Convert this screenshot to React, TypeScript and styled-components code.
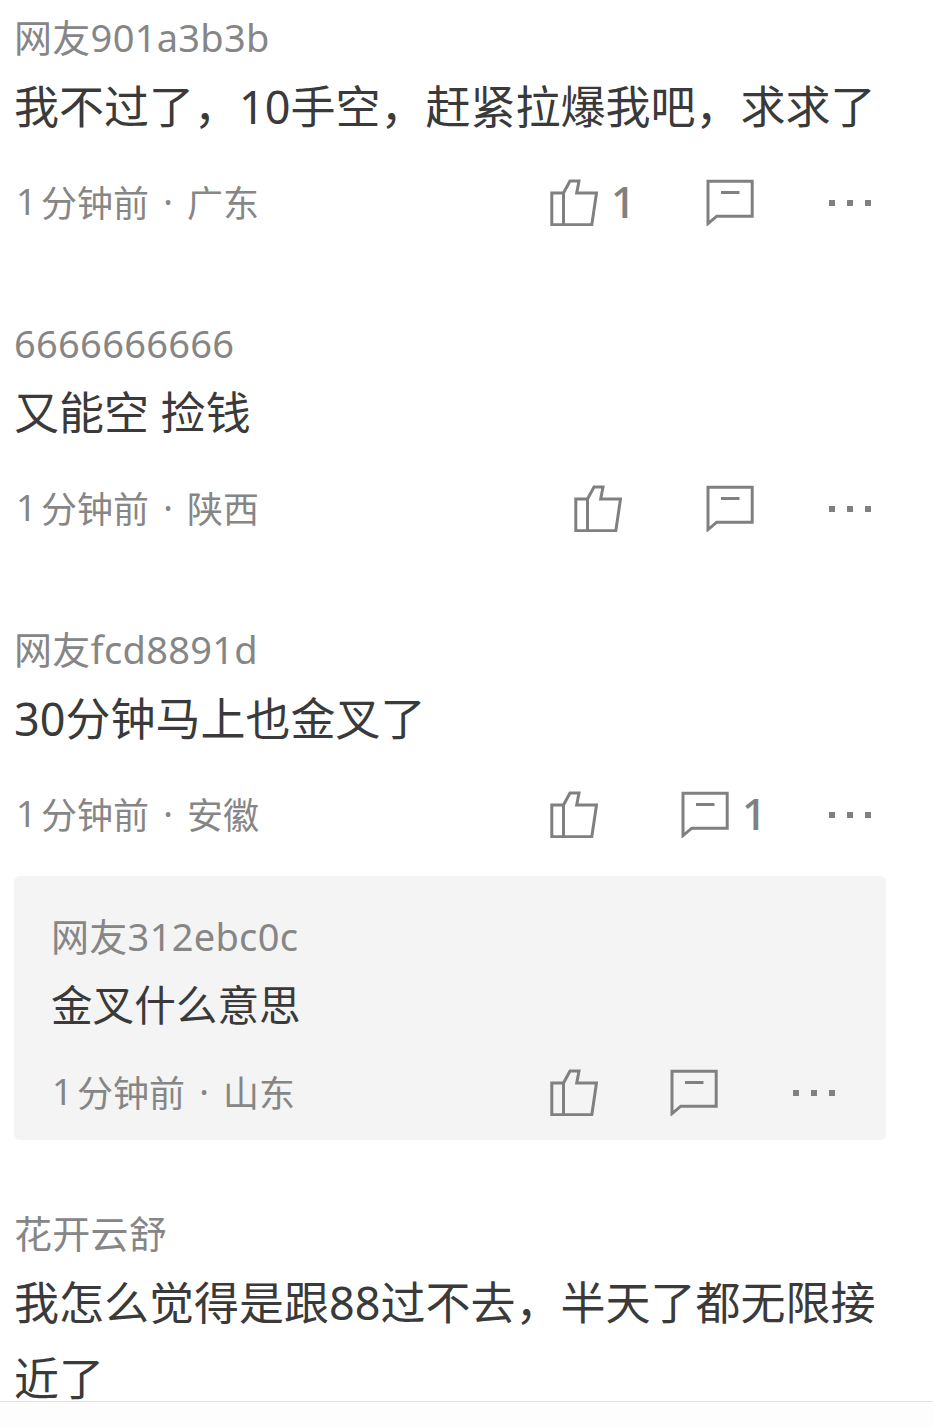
import React from "react";
import styled, { createGlobalStyle } from "styled-components";

const Global = createGlobalStyle`
  html, body { margin: 0; padding: 0; background: #fff; }
`;

const FONT = `"Noto Sans", "Noto Sans CJK SC", sans-serif`;

const Page = styled.main`
  position: relative;
  width: 933px;
  height: 1427px;
  overflow: hidden;
  background: #fff;
  padding: 12px 0 0 14px;
  box-sizing: border-box;
  font-family: ${FONT};
`;
const CommentBlock = styled.article<{ $after: number }>`
  width: 872px;
  margin-bottom: ${(p) => p.$after}px;
`;
const Name = styled.div`
  height: 50px;
  line-height: 50px;
  font-size: 38px;
  font-weight: 400;
  letter-spacing: 0.3px;
  color: #868686;
  white-space: nowrap;
`;
const Body = styled.div`
  margin-top: 7px;
  font-size: 45px;
  font-weight: 400;
  line-height: 76px;
  color: #3a3a3a;
`;
const MetaRow = styled.div<{ $right: number }>`
  display: flex;
  align-items: center;
  height: 48px;
  margin-top: 33px;
  padding: 0 ${(p) => p.$right}px 0 2px;
`;
const MetaText = styled.div`
  flex: 1;
  display: flex;
  align-items: center;
  font-size: 36px;
  font-weight: 400;
  color: #868686;
  white-space: pre;
  margin-top: -2px;
`;
const Digit = styled.span`
  width: 25px;
`;
const Sep = styled.span`
  width: 38px;
  text-align: center;
`;
const Action = styled.div<{ $after: number }>`
  display: flex;
  align-items: center;
  height: 48px;
  margin-right: ${(p) => p.$after}px;
  color: #808080;
`;
const Count = styled.span`
  margin-left: 13px;
  margin-top: -2px;
  font-size: 44px;
  font-weight: 500;
  line-height: 48px;
  color: #808080;
`;
const Dots = styled.div`
  display: flex;
  gap: 12px;
  margin-top: 2px;
`;
const Dot = styled.i`
  display: block;
  width: 6px;
  height: 6px;
  background: #808080;
`;
const Reply = styled.section`
  margin-top: 38px;
  width: 872px;
  box-sizing: border-box;
  padding: 35px 0 24px 37px;
  background: #f4f4f4;
  border-radius: 6px;
`;
const ReplyBody = styled.div`
  margin-top: 14px;
  font-size: 41.6px;
  font-weight: 400;
  line-height: 60px;
  color: #3a3a3a;
`;
const ReplyMeta = styled.div`
  margin-left: -1px;
`;
const Footer = styled.div`
  position: absolute;
  left: 0;
  right: 0;
  bottom: 0;
  height: 26px;
  box-sizing: border-box;
  border-top: 1px solid #e2e2e2;
  background: #fdfdfd;
`;

const ThumbIcon = () => (
  <svg width="48" height="48" viewBox="0 0 48 48" fill="none" stroke="currentColor" strokeWidth="3">
    <path d="M1.8 15H13.5V46.8H1.8Z" />
    <path d="M13.5 15L20 3H29L26.7 15H46.5L41.8 46.8H13.5" />
  </svg>
);
const BubbleIcon = () => (
  <svg width="48" height="48" viewBox="0 0 48 48" fill="none" stroke="currentColor" strokeWidth="3">
    <path d="M2 3.2H46.2V38.2H10.8L2 45.6Z" />
    <path d="M15 14.5H33.5" />
  </svg>
);

type MetaProps = {
  place: string;
  right?: number;
  likes?: number;
  replies?: number;
  likeAfter: number;
  replyAfter: number;
};

const Meta = ({ place, right = 15, likes, replies, likeAfter, replyAfter }: MetaProps) => (
  <MetaRow $right={right}>
    <MetaText>
      <Digit>1</Digit>
      <span>分钟前</span>
      <Sep>·</Sep>
      <span>{place}</span>
    </MetaText>
    <Action $after={likeAfter}>
      <ThumbIcon />
      {likes ? <Count>{likes}</Count> : null}
    </Action>
    <Action $after={replyAfter}>
      <BubbleIcon />
      {replies ? <Count>{replies}</Count> : null}
    </Action>
    <Dots>
      <Dot />
      <Dot />
      <Dot />
    </Dots>
  </MetaRow>
);

export default function App() {
  return (
    <Page>
      <Global />
      <CommentBlock $after={92}>
        <Name>网友901a3b3b</Name>
        <Body>我不过了，10手空，赶紧拉爆我吧，求求了</Body>
        <Meta place="广东" likes={1} likeAfter={70} replyAfter={75} />
      </CommentBlock>
      <CommentBlock $after={92}>
        <Name>6666666666</Name>
        <Body>又能空 捡钱</Body>
        <Meta place="陕西" likeAfter={84} replyAfter={75} />
      </CommentBlock>
      <CommentBlock $after={68}>
        <Name>网友fcd8891d</Name>
        <Body>30分钟马上也金叉了</Body>
        <Meta place="安徽" replies={1} likeAfter={83} replyAfter={62} />
        <Reply>
          <Name>网友312ebc0c</Name>
          <ReplyBody>金叉什么意思</ReplyBody>
          <ReplyMeta>
            <Meta place="山东" right={51} likeAfter={72} replyAfter={75} />
          </ReplyMeta>
        </Reply>
      </CommentBlock>
      <CommentBlock $after={0}>
        <Name>花开云舒</Name>
        <Body>我怎么觉得是跟88过不去，半天了都无限接近了</Body>
      </CommentBlock>
      <Footer />
    </Page>
  );
}
